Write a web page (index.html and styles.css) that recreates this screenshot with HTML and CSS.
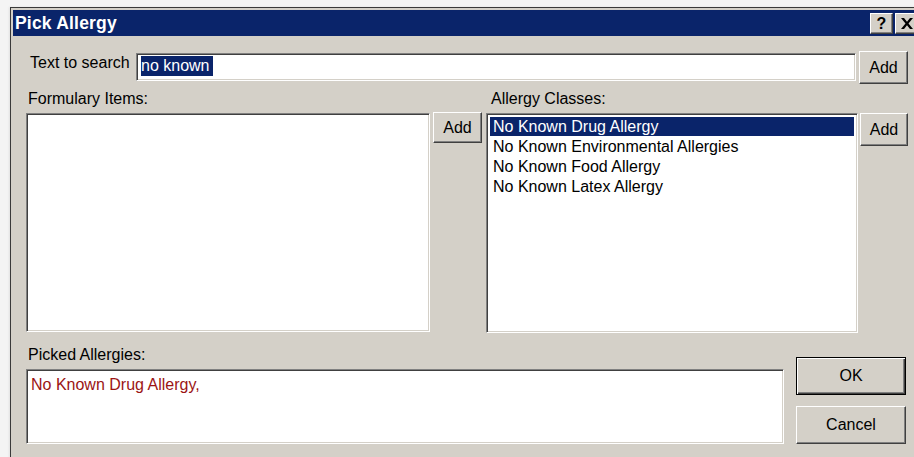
FILE: index.html
```html
<!DOCTYPE html>
<html>
<head>
<meta charset="utf-8">
<title>Pick Allergy</title>
<link rel="stylesheet" href="styles.css">
</head>
<body>
<div class="window">
  <div class="titlebar">
    <span class="title">Pick Allergy</span>
    <div class="caption-btns">
      <div class="cap-btn help">?</div>
      <div class="cap-btn close">
        <svg width="12" height="11" viewBox="0 0 12 11"><path d="M0 0h3l3 3.8L9 0h3L7.5 5.5 12 11H9L6 7.2 3 11H0l4.5-5.5z" fill="#000"/></svg>
      </div>
    </div>
  </div>

  <div class="client">
    <div class="search-row">
      <label class="search-label">Text to search</label>
      <div class="field search-field"><span class="sel">no known</span></div>
      <div class="btn add-top">Add</div>
    </div>

    <div class="lists-row">
      <div class="col formulary">
        <div class="caption">Formulary Items:</div>
        <div class="field listbox formulary-list"></div>
      </div>
      <div class="btn add-mid">Add</div>
      <div class="col classes">
        <div class="caption">Allergy Classes:</div>
        <div class="field listbox classes-list">
          <div class="item selected">No Known Drug Allergy</div>
          <div class="item">No Known Environmental Allergies</div>
          <div class="item">No Known Food Allergy</div>
          <div class="item">No Known Latex Allergy</div>
        </div>
      </div>
      <div class="btn add-right">Add</div>
    </div>

    <div class="picked-row">
      <div class="col picked">
        <div class="caption picked-caption">Picked Allergies:</div>
        <div class="field picked-box">No Known Drug Allergy,</div>
      </div>
      <div class="actions">
        <div class="btn ok">OK</div>
        <div class="btn cancel">Cancel</div>
      </div>
    </div>
  </div>
</div>
</body>
</html>
```

FILE: styles.css
```css
html, body {
  margin: 0;
  padding: 0;
}

body {
  background: #f4f4f4;
  overflow: hidden;
  width: 914px;
  height: 457px;
  font-family: "Liberation Sans", Arial, sans-serif;
  font-size: 16px;
  color: #000;
}

/* dialog frame */
.window {
  margin: 7px 0 0 10px;
  width: 920px;
  height: 470px;
  background: #d4d0c8;
  border-top: 1px solid #3a3a3a;
  border-left: 1px solid #3a3a3a;
  padding: 2px 0 0 2px;
  box-sizing: border-box;
  box-shadow: -1px 0 2px rgba(0, 0, 0, 0.08);
}

.titlebar {
  height: 26px;
  background: #0a246a;
  display: flex;
  align-items: center;
  justify-content: space-between;
}

.title {
  color: #fff;
  font-weight: bold;
  font-size: 17.5px;
  padding-left: 2px;
  letter-spacing: 0.2px;
}

.caption-btns {
  display: flex;
  gap: 2px;
  margin-right: 12px;
  margin-top: 1px;
}

.cap-btn {
  width: 23px;
  height: 21px;
  box-sizing: border-box;
  background: #d4d0c8;
  border: 1px solid;
  border-color: #fff #404040 #404040 #fff;
  box-shadow: inset -1px -1px #808080;
  display: flex;
  align-items: center;
  justify-content: center;
}

.cap-btn.help {
  font-weight: bold;
  font-size: 16px;
  line-height: 1;
}

/* sunken edit / list frame */
.field {
  background: #fff;
  box-sizing: border-box;
  border: 1px solid;
  border-color: #808080 #fff #fff #808080;
  box-shadow: inset 1px 1px #404040, inset -1px -1px #d4d0c8;
}

/* raised push button */
.btn {
  background: #d4d0c8;
  box-sizing: border-box;
  border: 1px solid;
  border-color: #fff #404040 #404040 #fff;
  box-shadow: inset -1px -1px #808080;
  display: flex;
  align-items: center;
  justify-content: center;
  font-size: 16px;
}

.client {
  padding-top: 15px;
}

.search-row {
  display: flex;
  align-items: flex-start;
  height: 33px;
}

.search-label {
  margin-left: 17px;
  width: 106px;
  line-height: 20px;
  margin-top: 2px;
}

.search-field {
  width: 720px;
  height: 28px;
  margin-top: 2px;
  padding: 2px 0 0 4px;
  line-height: 20px;
}

.sel {
  background: #0a246a;
  color: #fff;
  display: inline-block;
  height: 20px;
  padding-right: 3px;
}

.add-top {
  width: 49px;
  height: 33px;
  margin-left: 3px;
}

.lists-row {
  display: flex;
  align-items: flex-start;
}

.caption {
  height: 29px;
  padding-top: 5px;
  line-height: 20px;
  box-sizing: border-box;
  white-space: nowrap;
}

.formulary {
  margin-left: 13px;
  width: 404px;
}

.formulary .caption {
  padding-left: 2px;
}

.formulary-list {
  height: 219px;
}

.add-mid {
  width: 49px;
  height: 31px;
  margin: 28px 0 0 3px;
}

.classes {
  margin-left: 4px;
  width: 372px;
}

.classes .caption {
  padding-left: 5px;
}

.classes-list {
  height: 220px;
  padding: 3px;
}

.item {
  height: 20px;
  line-height: 19px;
  padding-left: 3px;
  white-space: nowrap;
}

.item.selected {
  background: #0a246a;
  color: #fff;
  height: 19px;
  margin-bottom: 1px;
}

.add-right {
  width: 48px;
  height: 33px;
  margin: 29px 0 0 2px;
}

.picked-row {
  display: flex;
  align-items: flex-start;
}

.picked {
  margin-left: 13px;
  width: 758px;
}

.picked-caption {
  height: 36px;
  padding: 12px 0 0 2px;
}

.picked-box {
  height: 75px;
  padding: 5px 0 0 4px;
  line-height: 20px;
  color: #9b1414;
}

.actions {
  margin-left: 12px;
  width: 110px;
  display: flex;
  flex-direction: column;
}

.ok {
  height: 38px;
  margin-top: 24px;
  border: 1px solid #000;
  box-shadow: inset 1px 1px #fff, inset -1px -1px #404040, inset -2px -2px #808080;
}

.cancel {
  height: 38px;
  margin-top: 11px;
}
```
